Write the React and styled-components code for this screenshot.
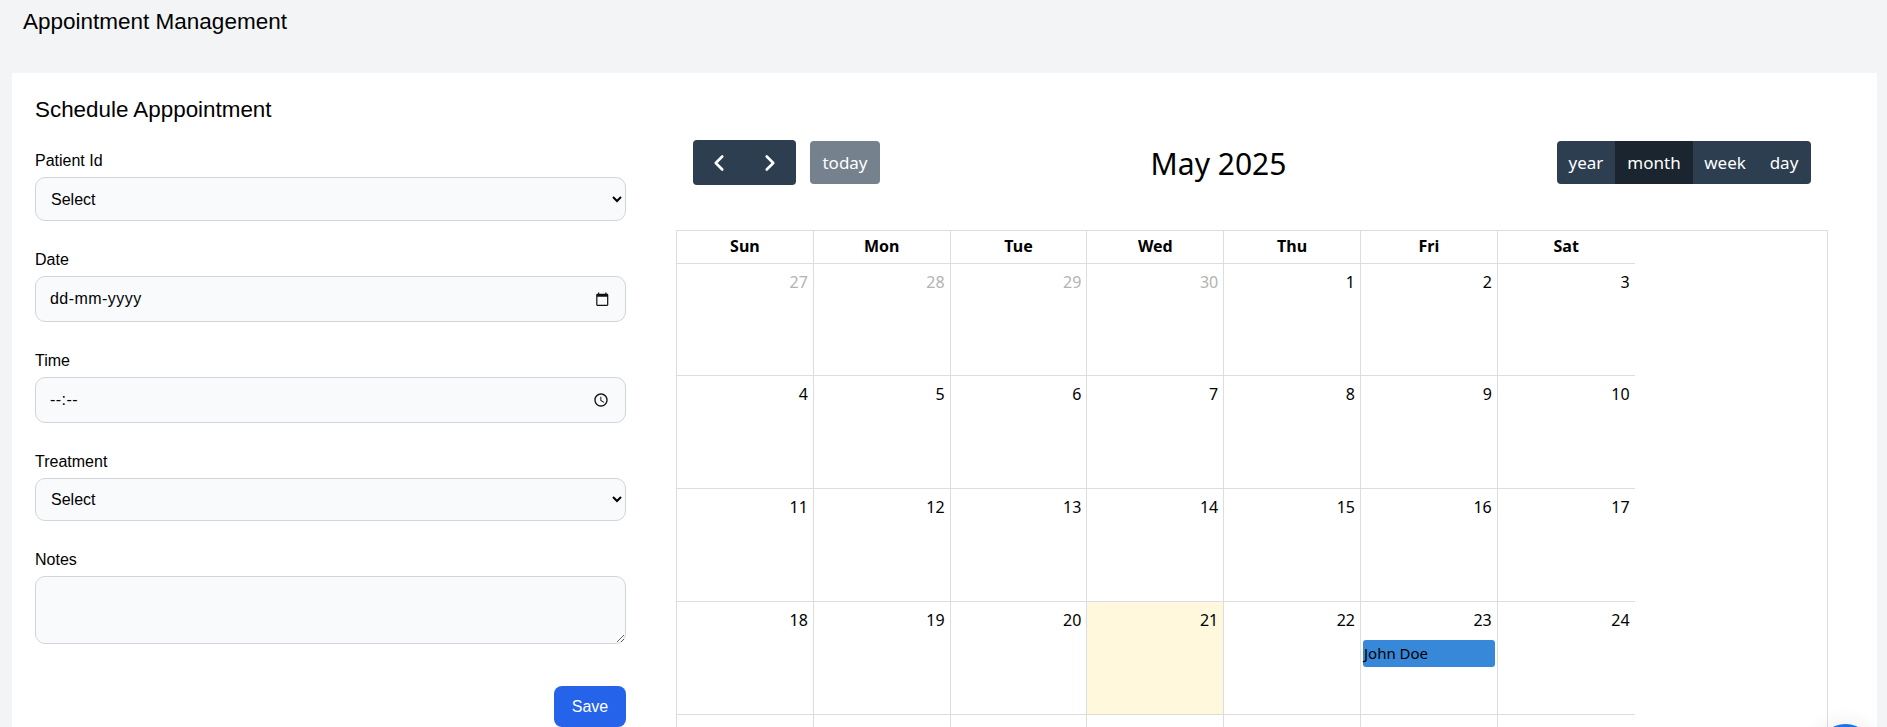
import styled, { createGlobalStyle } from "styled-components";
import { ChevronLeft, ChevronRight } from "lucide-react";

const GlobalStyle = createGlobalStyle`
  html, body {
    margin: 0;
    height: 727px;
    overflow: hidden;
    background-color: #f3f4f6;
    font-family: "Liberation Sans", Arial, sans-serif;
    color: #000;
  }
  * {
    box-sizing: border-box;
  }
`;

const Page = styled.div`
  padding: 0 10px 0 12px;
`;
const PageTitle = styled.h1`
  margin: 0;
  padding: 9px 0 0 11px;
  height: 73px;
  font-size: 22.5px;
  line-height: 26px;
  font-weight: 400;
`;
const Panel = styled.main`
  display: flex;
  background-color: #fff;
  padding: 24px 49px 0 23px;
  min-height: 900px;
`;

const FormColumn = styled.form`
  width: 591px;
  flex-shrink: 0;
`;
const FormTitle = styled.h2`
  margin: 0 0 27px;
  font-size: 22.4px;
  line-height: 26px;
  font-weight: 400;
`;
const Field = styled.div`
  display: flex;
  flex-direction: column;
  gap: 5px;
  margin-bottom: 28px;
`;
const Label = styled.label`
  font-size: 16px;
  line-height: 22px;
`;
const controlStyles = `
  width: 100%;
  background-color: #f9fafb;
  border: 1px solid #d1d5db;
  border-radius: 10px;
  font-family: "Liberation Sans", Arial, sans-serif;
  font-size: 16px;
  color: #000;
  outline: none;
`;
const Select = styled.select`
  ${controlStyles}
  height: ${(p) => p.$height}px;
  padding: 0 10px 0 11px;
`;
const InputShell = styled.div`
  ${controlStyles}
  display: flex;
  align-items: center;
  height: 46px;
  padding: 0 16px 0 14px;
`;
const Input = styled.input`
  flex: 1;
  min-width: 0;
  padding: 0;
  border: none;
  outline: none;
  background: transparent;
  font-family: inherit;
  font-size: 16px;
  letter-spacing: 0.45px;
  &::placeholder {
    color: #000;
    opacity: 1;
  }
`;
const Notes = styled.textarea`
  ${controlStyles}
  display: block;
  height: 68px;
  padding: 8px 12px;
`;
const SaveRow = styled.div`
  display: flex;
  justify-content: flex-end;
  margin-top: 42px;
`;
const SaveButton = styled.button`
  width: 72px;
  height: 41px;
  border: none;
  border-radius: 8px;
  background-color: #2563eb;
  color: #fff;
  font-family: "Liberation Sans", Arial, sans-serif;
  font-size: 16px;
`;

const CalendarColumn = styled.section`
  flex: 1;
  margin-left: 50px;
  padding-top: 43px;
  font-family: "Noto Sans", "Open Sans", sans-serif;
`;
const Toolbar = styled.div`
  display: flex;
  align-items: center;
  justify-content: space-between;
  height: 45px;
  padding: 0 17px;
  margin-bottom: 45px;
`;
const ToolbarGroup = styled.div`
  display: flex;
  align-items: center;
  gap: 14px;
`;
const ButtonGroup = styled.div`
  display: flex;
  border-radius: 4px;
  overflow: hidden;
`;
const NavButton = styled.button`
  display: flex;
  align-items: center;
  justify-content: center;
  width: 51.5px;
  height: 45px;
  padding: 0;
  border: none;
  background-color: #2c3e50;
  color: #fff;
`;
const ViewButton = styled.button`
  width: ${(p) => p.$width}px;
  height: 43px;
  padding: 0;
  border: none;
  background-color: ${(p) => (p.$active ? "#1a252f" : "#2c3e50")};
  color: #fff;
  font-family: inherit;
  font-size: 17px;
`;
const TodayButton = styled.button`
  width: 70px;
  height: 43px;
  padding: 0;
  border: none;
  border-radius: 4px;
  background-color: #2c3e50;
  opacity: 0.65;
  color: #fff;
  font-family: inherit;
  font-size: 17px;
`;
const MonthTitle = styled.h2`
  margin: 0;
  padding-top: 2px;
  font-size: 30px;
  font-weight: 400;
  line-height: 40px;
`;
const CalendarBox = styled.div`
  border: 1px solid #ddd;
  border-bottom: none;
  height: 600px;
`;
const Grid = styled.div`
  display: grid;
  grid-template-columns: repeat(7, 136.8px);
  grid-template-rows: 112px;
  grid-auto-rows: 113px;
`;
const HeaderRow = styled.div`
  display: grid;
  grid-template-columns: repeat(7, 136.8px);
`;
const HeaderCell = styled.div`
  height: 33px;
  border-right: 1px solid #ddd;
  border-bottom: 1px solid #ddd;
  font-size: 16px;
  font-weight: 700;
  line-height: 30px;
  text-align: center;
  &:nth-child(7) {
    border-right: none;
  }
`;
const DayCell = styled.div`
  padding: 5px 2px 0;
  border-right: 1px solid #ddd;
  border-bottom: 1px solid #ddd;
  background-color: ${(p) => (p.$today ? "#fff8dc" : "transparent")};
  &:nth-child(7n) {
    border-right: none;
  }
`;
const DayNumber = styled.div`
  padding-right: 3px;
  font-size: 16px;
  line-height: 26px;
  text-align: right;
  color: ${(p) => (p.$muted ? "#b3b3b3" : "#000")};
`;
const EventChip = styled.div`
  height: 27px;
  margin-top: 7px;
  padding-left: 1px;
  border-radius: 3px;
  background-color: #3788d8;
  color: #000;
  font-size: 15px;
  line-height: 26px;
`;
const ChatBubble = styled.div`
  position: fixed;
  left: 1818px;
  top: 724px;
  width: 55px;
  height: 55px;
  border-radius: 50%;
  background-color: #1a73e8;
  box-shadow: 0 4px 24px rgba(0, 0, 0, 0.14);
`;

const weekDays = ["Sun", "Mon", "Tue", "Wed", "Thu", "Fri", "Sat"];
const days = [
  [27, true], [28, true], [29, true], [30, true], [1], [2], [3],
  [4], [5], [6], [7], [8], [9], [10],
  [11], [12], [13], [14], [15], [16], [17],
  [18], [19], [20], [21], [22], [23], [24],
  [25], [26], [27], [28], [29], [30], [31],
];
const views = [
  { name: "year", width: 58 },
  { name: "month", width: 78, active: true },
  { name: "week", width: 64 },
  { name: "day", width: 54 },
];

const CalendarIcon = () => (
  <svg width="14.5" height="14.5" viewBox="0 0 24 24" fill="#111">
    <path d="M20 3h-1V1h-2v2H7V1H5v2H4c-1.1 0-2 .9-2 2v16c0 1.1.9 2 2 2h16c1.1 0 2-.9 2-2V5c0-1.1-.9-2-2-2zm0 18H4V8h16v13z" />
  </svg>
);

const ClockIcon = () => (
  <svg width="16" height="16" viewBox="0 0 24 24" fill="#111">
    <path d="M11.99 2C6.47 2 2 6.48 2 12s4.47 10 9.99 10C17.52 22 22 17.52 22 12S17.52 2 11.99 2zM12 20c-4.42 0-8-3.58-8-8s3.58-8 8-8 8 3.58 8 8-3.58 8-8 8zm.5-13H11v6l5.25 3.15.75-1.23-4.5-2.67z" />
  </svg>
);

const App = () => {
  return (
    <>
      <GlobalStyle />
      <Page>
        <PageTitle>Appointment Management</PageTitle>
        <Panel>
          <FormColumn>
            <FormTitle>Schedule Apppointment</FormTitle>
            <Field>
              <Label>Patient Id</Label>
              <Select $height={44}>
                <option>Select</option>
              </Select>
            </Field>
            <Field>
              <Label>Date</Label>
              <InputShell>
                <Input type="text" placeholder="dd-mm-yyyy" />
                <CalendarIcon />
              </InputShell>
            </Field>
            <Field>
              <Label>Time</Label>
              <InputShell>
                <Input type="text" placeholder="--:--" />
                <ClockIcon />
              </InputShell>
            </Field>
            <Field>
              <Label>Treatment</Label>
              <Select $height={43}>
                <option>Select</option>
              </Select>
            </Field>
            <Field>
              <Label>Notes</Label>
              <Notes />
            </Field>
            <SaveRow>
              <SaveButton type="button">Save</SaveButton>
            </SaveRow>
          </FormColumn>
          <CalendarColumn>
            <Toolbar>
              <ToolbarGroup>
                <ButtonGroup>
                  <NavButton type="button" aria-label="prev">
                    <ChevronLeft size={26} strokeWidth={2.4} />
                  </NavButton>
                  <NavButton type="button" aria-label="next">
                    <ChevronRight size={26} strokeWidth={2.4} />
                  </NavButton>
                </ButtonGroup>
                <TodayButton type="button">today</TodayButton>
              </ToolbarGroup>
              <MonthTitle>May 2025</MonthTitle>
              <ButtonGroup>
                {views.map((view) => (
                  <ViewButton
                    key={view.name}
                    type="button"
                    $width={view.width}
                    $active={view.active}
                  >
                    {view.name}
                  </ViewButton>
                ))}
              </ButtonGroup>
            </Toolbar>
            <CalendarBox>
              <HeaderRow>
                {weekDays.map((day) => (
                  <HeaderCell key={day}>{day}</HeaderCell>
                ))}
              </HeaderRow>
              <Grid>
                {days.map(([num, muted], i) => (
                  <DayCell key={i} $today={i === 24}>
                    <DayNumber $muted={muted}>{num}</DayNumber>
                    {i === 26 && <EventChip>John Doe</EventChip>}
                  </DayCell>
                ))}
              </Grid>
            </CalendarBox>
          </CalendarColumn>
        </Panel>
      </Page>
      <ChatBubble />
    </>
  );
};

export default App;
